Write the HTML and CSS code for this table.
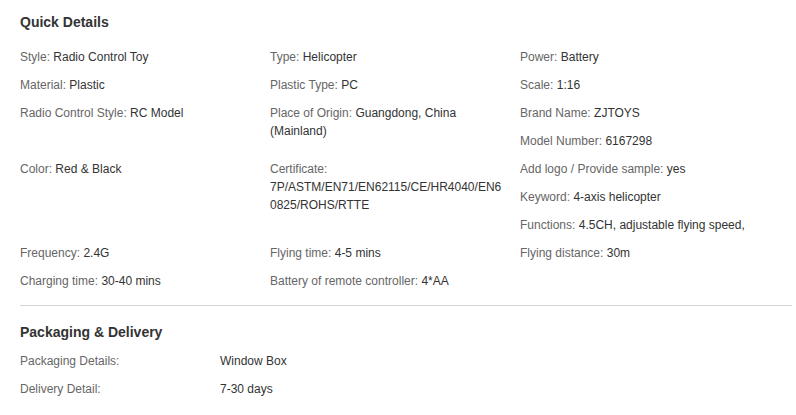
FILE: index.html
```html
<!DOCTYPE html>
<html>
<head>
<meta charset="utf-8">
<link rel="stylesheet" href="styles.css">
</head>
<body>
<div class="page">
  <h3 class="title">Quick Details</h3>
  <div class="details">
    <dl class="item"><dt>Style:</dt> <dd>Radio Control Toy</dd></dl>
    <dl class="item"><dt>Type:</dt> <dd>Helicopter</dd></dl>
    <dl class="item"><dt>Power:</dt> <dd>Battery</dd></dl>
    <dl class="item"><dt>Material:</dt> <dd>Plastic</dd></dl>
    <dl class="item"><dt>Plastic Type:</dt> <dd>PC</dd></dl>
    <dl class="item"><dt>Scale:</dt> <dd>1:16</dd></dl>
    <dl class="item"><dt>Radio Control Style:</dt> <dd>RC Model</dd></dl>
    <dl class="item"><dt>Place of Origin:</dt> <dd>Guangdong, China (Mainland)</dd></dl>
    <dl class="item"><dt>Brand Name:</dt> <dd>ZJTOYS</dd></dl>
    <dl class="item"><dt>Model Number:</dt> <dd>6167298</dd></dl>
    <dl class="item"><dt>Color:</dt> <dd>Red &amp; Black</dd></dl>
    <dl class="item"><dt>Certificate:</dt> <dd>7P/ASTM/EN71/EN62115/CE/HR4040/EN60825/ROHS/RTTE</dd></dl>
    <dl class="item"><dt>Add logo / Provide sample:</dt> <dd>yes</dd></dl>
    <dl class="item"><dt>Keyword:</dt> <dd>4-axis helicopter</dd></dl>
    <dl class="item"><dt>Functions:</dt> <dd>4.5CH, adjustable flying speed,</dd></dl>
    <dl class="item"><dt>Frequency:</dt> <dd>2.4G</dd></dl>
    <dl class="item"><dt>Flying time:</dt> <dd>4-5 mins</dd></dl>
    <dl class="item"><dt>Flying distance:</dt> <dd>30m</dd></dl>
    <dl class="item"><dt>Charging time:</dt> <dd>30-40 mins</dd></dl>
    <dl class="item"><dt>Battery of remote controller:</dt> <dd>4*AA</dd></dl>
  </div>
  <hr class="divider">
  <h3 class="title">Packaging &amp; Delivery</h3>
  <div class="pack">
    <div class="pack-row"><span class="pack-label">Packaging Details:</span><span class="pack-value">Window Box</span></div>
    <div class="pack-row"><span class="pack-label">Delivery Detail:</span><span class="pack-value">7-30 days</span></div>
  </div>
</div>
</body>
</html>
```

FILE: styles.css
```css
html, body {
  margin: 0;
  padding: 0;
  background: #fff;
}
body {
  font-family: "Liberation Sans", Arial, sans-serif;
  font-size: 12px;
  color: #333;
}
.page {
  padding: 13px 4px 0 20px;
}
.title {
  margin: 0;
  font-size: 14px;
  line-height: 18px;
  font-weight: bold;
  color: #333;
}
.details {
  margin-top: 17px;
  width: 750px;
}
.details::after {
  content: "";
  display: block;
  clear: both;
}
.item {
  float: left;
  width: 236px;
  padding-right: 14px;
  margin: 0 0 10px 0;
  line-height: 18px;
  overflow-wrap: break-word;
  word-wrap: break-word;
}
.item dt,
.item dd {
  display: inline;
  margin: 0;
}
.item dt {
  color: #666;
}
.item dd {
  color: #333;
}
.divider {
  border: 0;
  border-top: 1px solid #d4d4d4;
  margin: 5px 0 17px 0;
  height: 0;
}
.pack {
  margin-top: 11px;
}
.pack-row {
  display: flex;
  line-height: 18px;
  margin-bottom: 10px;
}
.pack-label {
  width: 200px;
  color: #666;
}
.pack-value {
  color: #333;
}
```
